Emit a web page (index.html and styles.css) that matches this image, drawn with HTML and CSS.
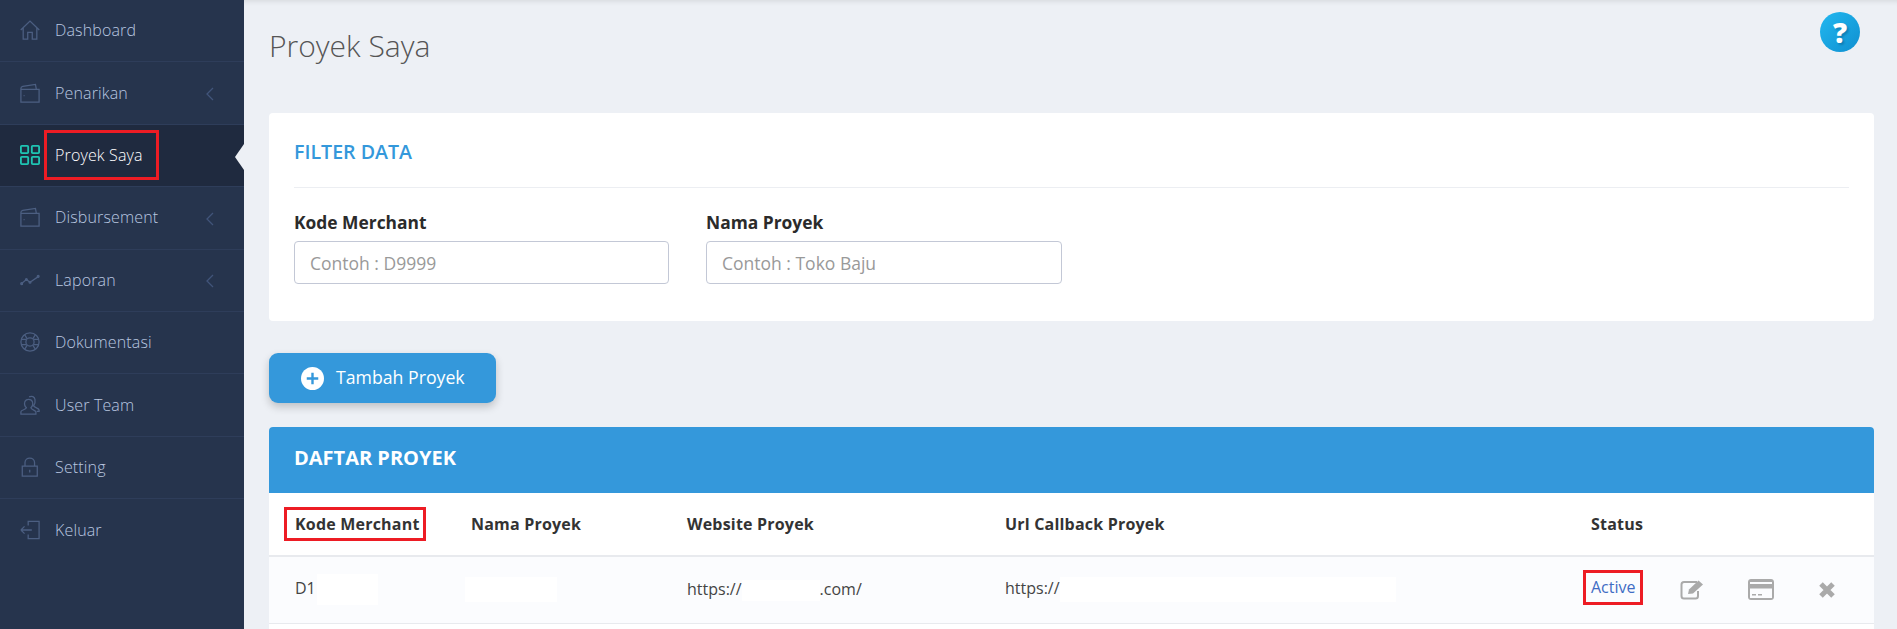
FILE: index.html
```html
<!DOCTYPE html>
<html lang="en">
<head>
<meta charset="UTF-8">
<meta name="viewport" content="width=device-width, initial-scale=1.0">
<title>Proyek Saya</title>
<link rel="stylesheet" href="styles.css">
</head>
<body>
<div class="layout">
    <nav class="sidebar">
        <a class="nav-item">
            <svg class="nav-icon" viewBox="0 0 22 22"><path d="M.8 11 11 1.200 21.200 11M3.500 8.500V21H8.500V13.500H13.500V21H18.500V8.500"/></svg>
            <span>Dashboard</span>
        </a>
        <a class="nav-item">
            <svg class="nav-icon" viewBox="0 0 22 22"><path d="M1 7V6C1 4.500 2 4 3 3.800L17 1.500 18 7M1 7H21V21H1ZM4 14H5"/></svg>
            <span>Penarikan</span>
            <svg class="nav-arrow" viewBox="0 0 8 14"><path d="M7 1 1 7 7 13"/></svg>
        </a>
        <a class="nav-item active">
            <svg class="nav-icon" viewBox="0 0 22 22"><rect x="1" y="1" width="8" height="8" rx="1"/><rect x="13" y="1" width="8" height="8" rx="1"/><rect x="1" y="13" width="8" height="8" rx="1"/><rect x="13" y="13" width="8" height="8" rx="1"/></svg>
            <span class="mark mark-nav">Proyek Saya</span>
        </a>
        <a class="nav-item">
            <svg class="nav-icon" viewBox="0 0 22 22"><path d="M1 7V6C1 4.500 2 4 3 3.800L17 1.500 18 7M1 7H21V21H1ZM4 14H5"/></svg>
            <span>Disbursement</span>
            <svg class="nav-arrow" viewBox="0 0 8 14"><path d="M7 1 1 7 7 13"/></svg>
        </a>
        <a class="nav-item">
            <svg class="nav-icon" viewBox="0 0 22 22"><path d="M1.500 15 7 10.500 11 13.500 20.500 7"/><circle cx="1.800" cy="15" r="1"/><circle cx="7" cy="10.500" r="1"/><circle cx="11" cy="13.500" r="1"/><circle cx="20" cy="7" r="1"/></svg>
            <span>Laporan</span>
            <svg class="nav-arrow" viewBox="0 0 8 14"><path d="M7 1 1 7 7 13"/></svg>
        </a>
        <a class="nav-item">
            <svg class="nav-icon" viewBox="0 0 22 22"><circle cx="11" cy="11" r="10"/><circle cx="11" cy="11" r="4.500"/><path d="M5 3 8 7.500M17 3 14 7.500M5 19 8 14.500M17 19 14 14.500M1.500 8H6.800M1.500 14H6.800M15.200 8H20.500M15.200 14H20.500"/></svg>
            <span>Dokumentasi</span>
        </a>
        <a class="nav-item">
            <svg class="nav-icon" viewBox="0 0 22 22"><path d="M1 21V18.500C1 16.500 7 16 7 14 5 12 4.500 9.500 5.500 7 7 4 12 4 13.500 7 14.500 9.500 14 12 12 14 12 16 17 16.500 17.500 18.500V21ZM10 2C13 .5 16 2 16.500 5 17 8 16.500 10 15 12 16 14 21 14.500 21 16.500V18H18.500"/></svg>
            <span>User Team</span>
        </a>
        <a class="nav-item">
            <svg class="nav-icon" viewBox="0 0 22 22"><path d="M2.500 10H19V21H2.500ZM5.500 10V6C5.500-.5 16-.5 16 6V10M10.700 14V17"/></svg>
            <span>Setting</span>
        </a>
        <a class="nav-item">
            <svg class="nav-icon" viewBox="0 0 22 22"><path d="M9 6V1.500H21V20.500H9V16M1 11H13M1 11 5 7M1 11 5 15"/></svg>
            <span>Keluar</span>
        </a>
    </nav>

    <main class="content">
        <div class="help">?</div>
        <h1 class="page-title">Proyek Saya</h1>

        <section class="filter-card">
            <h2 class="filter-title">FILTER DATA</h2>
            <div class="filter-fields">
                <div class="field field-kode">
                    <label>Kode Merchant</label>
                    <input type="text" placeholder="Contoh : D9999">
                </div>
                <div class="field field-nama">
                    <label>Nama Proyek</label>
                    <input type="text" placeholder="Contoh : Toko Baju">
                </div>
            </div>
        </section>

        <button class="btn-add">
            <svg class="btn-icon" viewBox="0 0 24 24"><circle cx="12" cy="12" r="12" fill="#fff"/><path d="M12 6V18M6 12H18" stroke="#3498db" stroke-width="2.500"/></svg>
            <span class="btn-label">Tambah Proyek</span>
        </button>

        <section class="list-card">
            <h2 class="list-title">DAFTAR PROYEK</h2>
            <table class="list-table">
                <thead>
                    <tr>
                        <th class="col-kode"><span class="mark mark-head">Kode Merchant</span></th>
                        <th class="col-nama">Nama Proyek</th>
                        <th class="col-web">Website Proyek</th>
                        <th class="col-url">Url Callback Proyek</th>
                        <th class="col-status">Status</th>
                        <th></th>
                    </tr>
                </thead>
                <tbody>
                    <tr>
                        <td>D1<span class="blank blank-kode"></span></td>
                        <td><span class="blank blank-nama"></span></td>
                        <td>https://<span class="blank blank-web"></span>.com/</td>
                        <td>https://<span class="blank blank-url"></span></td>
                        <td><span class="mark mark-status">Active</span></td>
                        <td>
                            <div class="actions">
                                <svg class="act act-edit" viewBox="0 0 24 21"><path d="M17 3H4C2.500 3 1.500 4 1.500 5.500V17C1.500 18.500 2.500 19.500 4 19.500H15.500C17 19.500 18 18.500 18 17V12" fill="none" stroke="#aaa" stroke-width="2"/><path d="M8 15 9 10.500 18.500 1.500 23 5.500 13 14.500Z" fill="#aaa"/></svg>
                                <svg class="act act-card" viewBox="0 0 26 21"><path fill-rule="evenodd" d="M3 0H23C24.700 0 26 1.300 26 3V18C26 19.700 24.700 21 23 21H3C1.300 21 0 19.700 0 18V3C0 1.300 1.300 0 3 0ZM2 3V5H24V3ZM2 9.500V19H24V9.500ZM4 15H8V16.500H4ZM10 15H14V16.500H10Z" fill="#aaa"/></svg>
                                <svg class="act act-del" viewBox="0 0 18 18"><path d="M3 3 15 15M15 3 3 15" stroke="#aaa" stroke-width="5"/></svg>
                            </div>
                        </td>
                    </tr>
                </tbody>
            </table>
        </section>
    </main>
</div>
</body>
</html>
```

FILE: styles.css
```css
* {
    box-sizing: border-box;
}

html, body {
    height: 100%;
}

body {
    margin: 0;
    overflow: hidden;
    font-family: "Open Sans", sans-serif;
    background-color: #edf0f5;
    color: #333;
}

.layout {
    display: flex;
    height: 629px;
}

/* sidebar */
.sidebar {
    width: 244px;
    flex-shrink: 0;
    background-color: #26344d;
}

.nav-item {
    position: relative;
    display: flex;
    align-items: center;
    height: 62.4px;
    padding: 0 0 1px 20px;
    border-bottom: 1px solid #2e3d5a;
    color: #b9c7e0;
    font-size: 16px;
    font-weight: 300;
    letter-spacing: 0.15px;
}

.nav-item:last-child {
    border-bottom: none;
}

.nav-icon {
    width: 20px;
    height: 20px;
    margin-right: 15px;
    fill: none;
    stroke: #4c5f82;
    stroke-width: 1.400;
}

.nav-arrow {
    width: 8px;
    height: 14px;
    margin-left: auto;
    margin-right: 30px;
    margin-top: 3px;
    fill: none;
    stroke: #41547a;
    stroke-width: 1.300;
}

.nav-item.active {
    background-color: #1f2a3f;
    color: #fff;
}

.nav-item.active .nav-icon {
    stroke: #1fc5b4;
    stroke-width: 2;
}

.nav-item.active::after {
    content: "";
    position: absolute;
    right: 0;
    top: 19px;
    border: 13px solid transparent;
    border-left: none;
    border-right: 9px solid #edf0f5;
}

/* red boxes drawn on the screenshot */
.mark {
    display: inline-block;
    border: 3px solid #ed1c24;
}

.mark-nav {
    margin-left: -11px;
    padding: 11px 13px 11px 8px;
}

.mark-head {
    margin-left: -11px;
    padding: 3px 3px 3px 8px;
}

.mark-status {
    margin-left: -8px;
    margin-bottom: 5px;
    padding: 3px 4px 4px 5px;
    font-weight: 400;
    color: #3f6cc4;
}

/* main */
.content {
    position: relative;
    flex: 1;
    display: flex;
    flex-direction: column;
    padding: 0 23px 0 25px;
    box-shadow: inset 0 6px 6px -6px rgba(0, 0, 0, 0.15);
}

.help {
    position: absolute;
    top: 12px;
    right: 37px;
    width: 40px;
    height: 40px;
    border-radius: 50%;
    background: linear-gradient(135deg, #22b8f0, #0f8fd0);
    color: #fff;
    font-size: 28px;
    font-weight: 800;
    line-height: 40px;
    text-align: center;
    text-shadow: 2px 2px 2px rgba(0, 60, 100, 0.3);
}

.page-title {
    margin: 0;
    height: 113px;
    flex-shrink: 0;
    padding-top: 24px;
    font-size: 30px;
    line-height: 44px;
    font-weight: 300;
    color: #555;
}

.filter-card {
    height: 208px;
    flex-shrink: 0;
    padding: 0 25px;
    background-color: #fff;
    border-radius: 4px;
}

.filter-title {
    margin: 0;
    height: 75px;
    border-bottom: 1px solid #eceef2;
    font-size: 19.600px;
    font-weight: 600;
    line-height: 78px;
    color: #3498db;
}

.filter-fields {
    display: flex;
    padding-top: 22px;
    gap: 37px;
}

.field label {
    display: block;
    margin-bottom: 7px;
    font-size: 17.400px;
    font-weight: 700;
    line-height: 24px;
    color: #2b2b2b;
}

.field input {
    display: block;
    width: 100%;
    height: 43px;
    padding: 0 15px;
    border: 1px solid #c3c8d6;
    border-radius: 4px;
    font-family: inherit;
    font-size: 17.500px;
    background-color: #fff;
}

.field input::placeholder {
    color: #999;
}

.field-kode {
    width: 375px;
}

.field-nama {
    width: 356px;
}

.btn-add {
    display: flex;
    align-items: center;
    flex-shrink: 0;
    width: 227px;
    height: 50px;
    margin-top: 32px;
    padding: 0 0 0 32px;
    gap: 12px;
    border: none;
    border-radius: 9px;
    background-color: #3498db;
    box-shadow: 0 4px 8px rgba(0, 0, 0, 0.2);
    color: #fff;
    font-family: inherit;
    font-size: 17.700px;
}

.btn-icon {
    width: 23px;
    height: 23px;
}

.btn-label {
    margin-bottom: 2px;
}

.list-card {
    flex: 1;
    margin-top: 24px;
    background-color: #fff;
    border-radius: 4px 4px 0 0;
}

.list-title {
    margin: 0;
    height: 66px;
    padding-left: 25px;
    background-color: #3498db;
    border-radius: 4px 4px 0 0;
    color: #fff;
    font-size: 20px;
    font-weight: 700;
    line-height: 62px;
}

.list-table {
    width: 100%;
    border-collapse: collapse;
    table-layout: fixed;
}

.list-table th {
    height: 63px;
    padding: 0 0 0 26px;
    border-bottom: 2px solid #e8eaee;
    font-size: 16px;
    font-weight: 700;
    letter-spacing: 0.2px;
    text-align: left;
    color: #333;
}

.list-table td {
    height: 67px;
    padding: 0 0 0 26px;
    border-bottom: 1px solid #e8eaee;
    background-color: #fbfcfe;
    font-size: 16px;
    font-weight: 400;
    color: #444;
}

.col-kode { width: 176px; }
.col-nama { width: 216px; }
.col-web { width: 318px; }
.col-url { width: 586px; }
.col-status { width: 95px; }

/* white patches that hide private data */
.blank {
    display: inline-block;
    vertical-align: middle;
    background-color: #fff;
}

.blank-kode {
    width: 61px;
    height: 31px;
    margin-left: 1px;
}

.blank-nama {
    width: 92px;
    height: 25px;
    margin-left: -6px;
}

.blank-web {
    width: 78px;
    height: 21px;
}

.blank-url {
    width: 336px;
    height: 25px;
}

.actions {
    display: flex;
    align-items: center;
}

.act {
    flex-shrink: 0;
}

.act-edit {
    width: 24px;
    height: 21px;
    margin-left: -6px;
}

.act-card {
    width: 26px;
    height: 21px;
    margin-left: 44px;
}

.act-del {
    width: 18px;
    height: 18px;
    margin-left: 44px;
}
```
